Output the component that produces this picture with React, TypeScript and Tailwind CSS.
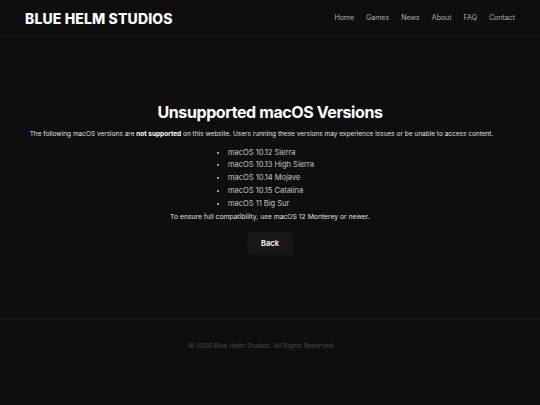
import React from "react";

const versions = [
  "macOS 10.12 Sierra",
  "macOS 10.13 High Sierra",
  "macOS 10.14 Mojave",
  "macOS 10.15 Catalina",
  "macOS 11 Big Sur",
];

const links = ["Home", "Games", "News", "About", "FAQ", "Contact"];

export default function App() {
  return (
    <div className="min-h-[405px] bg-[#0e0e0e] text-white flex flex-col" style={{ fontFamily: "Inter, 'Noto Sans', sans-serif" }}>
      <header className="h-[37px] border-b border-[#181818] flex items-center justify-between px-[25px]">
        <div className="text-[14px] font-extrabold tracking-[0.01em]">BLUE HELM STUDIOS</div>
        <nav className="flex gap-[12px] text-[7px] text-[#b0b0b0] pt-[1px]">
          {links.map((l) => (
            <a key={l}>{l}</a>
          ))}
        </nav>
      </header>

      <main className="h-[283px] border-b border-[#181818] flex flex-col items-center pt-[67px]">
        <h1 className="text-[16px] font-bold leading-none tracking-tight">Unsupported macOS Versions</h1>
        <p className="mt-[10px] text-[6.5px] text-[#e0e0e0] pr-[17px]">
          The following macOS versions are <strong className="font-bold text-white">not supported</strong> on this website. Users running these versions may experience issues or be unable to access content.
        </p>
        <ul className="mt-[8px] list-disc text-[7.5px] text-[#c8c8c8] pl-[2px] space-y-[3.7px]">
          {versions.map((v) => (
            <li key={v} className="leading-[9px]">{v}</li>
          ))}
        </ul>
        <p className="mt-[4px] text-[6.8px] text-[#e0e0e0]">To ensure full compatibility, use macOS 12 Monterey or newer.</p>
        <button className="mt-[10px] w-[46px] h-[23px] rounded-[4px] bg-[#171717] text-[7.5px] font-semibold text-white">Back</button>
      </main>

      <footer className="flex-1 flex justify-center pt-[22px]">
        <p className="text-[6.5px] text-[#4c4c4c] pr-[17px]">© 2026 Blue Helm Studios. All Rights Reserved.</p>
      </footer>
    </div>
  );
}
